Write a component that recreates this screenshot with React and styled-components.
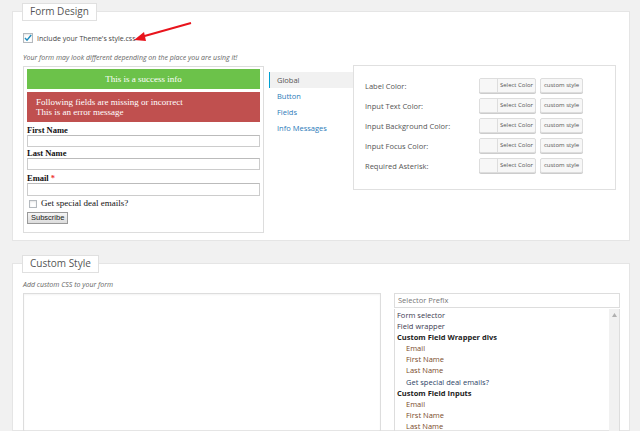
import styled, { createGlobalStyle } from "styled-components";

const GlobalStyle = createGlobalStyle`
  html, body {
    margin: 0;
    padding: 0;
    background: #f1f1f1;
    font-family: "Open Sans", "Noto Sans", sans-serif;
    color: #444;
    overflow: hidden;
  }
`;

const Page = styled.div`
  width: 640px;
  height: 431px;
  padding: 11px 10px 0 12px;
  box-sizing: border-box;
  display: flex;
  flex-direction: column;
  gap: 22px;
`;

const Panel = styled.section`
  position: relative;
  background: #fff;
  border: 1px solid #e5e5e5;
  padding: ${(p) => p.$pad || "20px 10px 7px"};
  flex: ${(p) => (p.$grow ? 1 : "none")};
  min-height: 0;
`;

const Tab = styled.div`
  position: absolute;
  top: -9px;
  left: 9px;
  background: #fff;
  border: 1px solid #e0e0e0;
  padding: 1px 7px 2px;
  font-size: 10px;
  line-height: 13px;
  color: #555;
`;

const CheckRow = styled.label`
  display: flex;
  align-items: center;
  gap: 4px;
  font-size: 7px;
  color: #444;
  height: 12px;
`;

const Box = styled.span`
  width: ${(p) => p.$s || 8}px;
  height: ${(p) => p.$s || 8}px;
  border: 1px solid #b4b9be;
  background: #fff;
  display: inline-flex;
  align-items: center;
  justify-content: center;
  box-shadow: inset 0 1px 2px rgba(0, 0, 0, 0.1);
`;

const Arrow = styled.svg`
  position: absolute;
  left: 110px;
  top: 10px;
`;

const Note = styled.p`
  margin: ${(p) => p.$m || "9px 0 3px"};
  font-size: 7px;
  font-style: italic;
  color: #666;
`;

const DesignRow = styled.div`
  display: flex;
  align-items: flex-start;
`;

const Preview = styled.div`
  width: 233px;
  border: 1px solid #ddd;
  padding: 2px 3px 8px;
  font-family: "Liberation Serif", "Times New Roman", serif;
  font-size: 9px;
  color: #111;
  margin-top: 1px;
`;

const Alert = styled.div`
  background: ${(p) => (p.$ok ? "#6cc24a" : "#c0504f")};
  color: #fff;
  text-align: ${(p) => (p.$ok ? "center" : "left")};
  padding: ${(p) => (p.$ok ? "5px 0 4px" : "5px 9px 5px")};
  line-height: ${(p) => (p.$ok ? "11px" : "10px")};
  margin-bottom: 3px;
`;

const FieldLabel = styled.div`
  font-weight: bold;
  font-size: 8.5px;
  line-height: 10px;
  margin-top: ${(p) => p.$top || "0"};
`;

const Star = styled.span`
  color: #e33;
`;

const TextInput = styled.div`
  height: ${(p) => p.$h || 10}px;
  border: 1px solid #ccc;
  border-top-color: #bbb;
`;

const Opt = styled.div`
  display: flex;
  align-items: center;
  gap: 4px;
  margin: 2px 0 0 2px;
  font-size: 9px;
  line-height: 11px;
`;

const Subscribe = styled.div`
  display: inline-block;
  margin-top: 3px;
  border: 1px solid #999;
  background: linear-gradient(#f5f5f5, #dcdcdc);
  padding: 0 3px;
  font-family: "Liberation Sans", Arial, sans-serif;
  font-size: 7.5px;
  line-height: 10px;
  color: #222;
`;

const TabList = styled.div`
  width: 84px;
  margin: 7px 0 0 5px;
  display: flex;
  flex-direction: column;
`;

const TabItem = styled.div`
  height: 16px;
  line-height: 16px;
  padding-left: 7px;
  font-size: 7.5px;
  color: ${(p) => (p.$active ? "#555" : "#2b7bb9")};
  background: ${(p) => (p.$active ? "#f1f1f1" : "transparent")};
  border-left: 1px solid ${(p) => (p.$active ? "#00a0d2" : "transparent")};
`;

const Settings = styled.div`
  width: 250px;
  border: 1px solid #e0e0e0;
  padding: 12px 0 17px 11px;
  display: flex;
  flex-direction: column;
  gap: 6px;
`;

const SetRow = styled.div`
  display: grid;
  grid-template-columns: 110px 57px 43px;
  justify-content: start;
  column-gap: 4px;
  align-items: center;
  height: 14px;
`;

const SetLabel = styled.span`
  font-size: 7.5px;
  color: #555;
`;

const ColorBtn = styled.div`
  display: flex;
  height: 13px;
  border: 1px solid #ddd;
  border-radius: 2px;
  background: #f7f7f7;
  box-shadow: 0 1px 0 #ccc;
  overflow: hidden;
`;

const Swatch = styled.span`
  width: 17px;
  border-right: 1px solid #ddd;
  background: #f7f7f7;
`;

const BtnText = styled.span`
  flex: 1;
  text-align: center;
  font-size: 6px;
  line-height: 13px;
  color: #555;
`;

const StyleBtn = styled.div`
  height: 13px;
  border: 1px solid #ddd;
  border-radius: 2px;
  background: #f7f7f7;
  box-shadow: 0 1px 0 #ccc;
  text-align: center;
  font-size: 6px;
  line-height: 13px;
  color: #555;
`;

const CustomGrid = styled.div`
  display: grid;
  grid-template-columns: 358px 226px;
  column-gap: 13px;
  align-items: start;
`;

const TextArea = styled.div`
  height: 160px;
  border: 1px solid #ddd;
  box-shadow: inset 0 1px 2px rgba(0, 0, 0, 0.05);
`;

const Prefix = styled.div`
  height: 13px;
  border: 1px solid #ddd;
  padding-left: 3px;
  font-size: 7.5px;
  line-height: 13px;
  color: #777;
`;

const ListBox = styled.div`
  position: relative;
  margin-top: 1px;
  border: 1px solid #ddd;
  border-top: none;
  padding: 1px 0 0 2px;
  height: 130px;
`;

const Scroll = styled.div`
  position: absolute;
  right: 0;
  top: 0;
  bottom: 0;
  width: 10px;
  background: #f1f1f1;
  display: flex;
  justify-content: center;
  padding-top: 4px;
  box-sizing: border-box;
`;

const Item = styled.div`
  font-size: 7.5px;
  line-height: 11.1px;
  padding-left: ${(p) => (p.$sub ? "9px" : "0")};
  font-weight: ${(p) => (p.$head ? "bold" : "normal")};
  color: ${(p) => p.$c || "#333"};
`;

const fields = [
  "Label Color:",
  "Input Text Color:",
  "Input Background Color:",
  "Input Focus Color:",
  "Required Asterisk:",
];

const items = [
  { t: "Form selector", c: "#3b3b4f" },
  { t: "Field wrapper", c: "#3b3b4f" },
  { t: "Custom Field Wrapper divs", head: true, c: "#222" },
  { t: "Email", sub: true, c: "#7a4b2a" },
  { t: "First Name", sub: true, c: "#7a4b2a" },
  { t: "Last Name", sub: true, c: "#7a4b2a" },
  { t: "Get special deal emails?", sub: true, c: "#2d4466" },
  { t: "Custom Field Inputs", head: true, c: "#222" },
  { t: "Email", sub: true, c: "#7a4b2a" },
  { t: "First Name", sub: true, c: "#7a4b2a" },
  { t: "Last Name", sub: true, c: "#7a4b2a" },
];

const App = () => {
  return (
    <Page>
      <GlobalStyle />
      <Panel>
        <Tab>Form Design</Tab>
        <CheckRow>
          <Box>
            <svg width="8" height="8" viewBox="0 0 8 8">
              <path d="M1 4 L3 6.2 L7.2 1" fill="none" stroke="#1e8cbe" strokeWidth="1.4" />
            </svg>
          </Box>
          Include your Theme's style.css
        </CheckRow>
        <Arrow width="72" height="22" viewBox="0 0 72 22">
          <line x1="68" y1="1" x2="18" y2="15" stroke="#e8141c" strokeWidth="2" />
          <polygon points="11,18 21,10 23,19" fill="#e8141c" />
        </Arrow>
        <Note>Your form may look different depending on the place you are using it!</Note>
        <DesignRow>
          <Preview>
            <Alert $ok>This is a success info</Alert>
            <Alert>
              Following fields are missing or incorrect
              <br />
              This is an error message
            </Alert>
            <FieldLabel $top="1px">First Name</FieldLabel>
            <TextInput />
            <FieldLabel $top="1px">Last Name</FieldLabel>
            <TextInput />
            <FieldLabel $top="3px">
              Email <Star>*</Star>
            </FieldLabel>
            <TextInput $h={11} />
            <Opt>
              <Box $s={6} />
              Get special deal emails?
            </Opt>
            <Subscribe>Subscribe</Subscribe>
          </Preview>
          <TabList>
            <TabItem $active>Global</TabItem>
            <TabItem>Button</TabItem>
            <TabItem>Fields</TabItem>
            <TabItem>Info Messages</TabItem>
          </TabList>
          <Settings>
            {fields.map((f) => (
              <SetRow key={f}>
                <SetLabel>{f}</SetLabel>
                <ColorBtn>
                  <Swatch />
                  <BtnText>Select Color</BtnText>
                </ColorBtn>
                <StyleBtn>custom style</StyleBtn>
              </SetRow>
            ))}
          </Settings>
        </DesignRow>
      </Panel>
      <Panel $grow $pad="16px 10px 0">
        <Tab>Custom Style</Tab>
        <Note $m="0 0 4px">Add custom CSS to your form</Note>
        <CustomGrid>
          <TextArea />
          <div>
            <Prefix>Selector Prefix</Prefix>
            <ListBox>
              <Scroll>
                <svg width="5" height="4" viewBox="0 0 5 4">
                  <polygon points="0,4 2.5,0 5,4" fill="#b0b0b0" />
                </svg>
              </Scroll>
              {items.map((it, i) => (
                <Item key={i} $sub={it.sub} $head={it.head} $c={it.c}>
                  {it.t}
                </Item>
              ))}
            </ListBox>
          </div>
        </CustomGrid>
      </Panel>
    </Page>
  );
};

export default App;
